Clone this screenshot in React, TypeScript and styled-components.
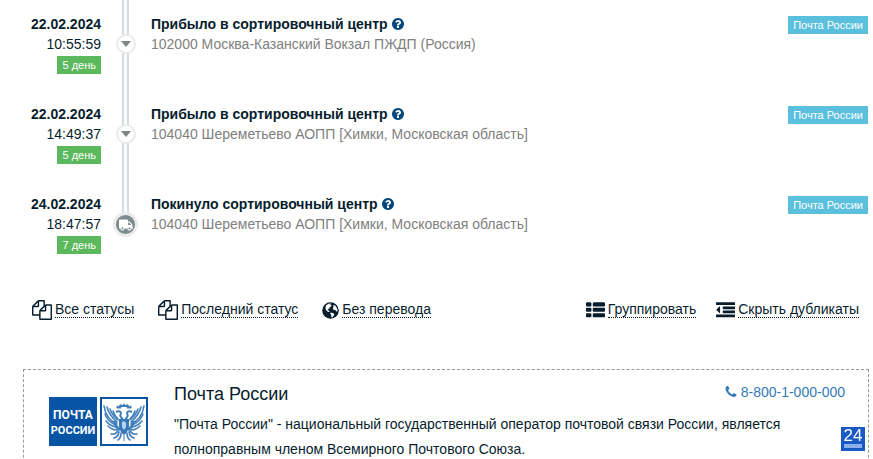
import React from "react";
import styled, { createGlobalStyle } from "styled-components";
import { FaTruck } from "react-icons/fa";

const GlobalStyle = createGlobalStyle`
  * { box-sizing: border-box; }
  html { scrollbar-width: none; }
  body {
    margin: 0;
    background: #fff;
    color: #071d2d;
    font: 14px/20px "Liberation Sans", Arial, sans-serif;
  }
`;

const Page = styled.main`
  padding: 0 4px 0 23px;
`;

const Timeline = styled.ol`
  list-style: none;
  margin: 0;
  padding: 0;
`;

const Event = styled.li<{ $first?: boolean }>`
  display: grid;
  grid-template-columns: 78px 49px minmax(0, 1fr) auto;
  padding-right: 1px;
  min-height: ${(p) => (p.$first ? 104 : 90)}px;
  > * {
    padding-top: ${(p) => (p.$first ? 14 : 0)}px;
  }
`;

const When = styled.div`
  display: flex;
  flex-direction: column;
  align-items: flex-end;
`;

const Tag = styled.span<{ $color: string }>`
  display: block;
  height: 18px;
  padding: 0 5px;
  margin-top: 2px;
  background: ${(p) => p.$color};
  color: #fff;
  font-size: 11px;
  line-height: 18px;
  white-space: nowrap;
`;

const Rail = styled.div<{ $end?: boolean }>`
  display: flex;
  justify-content: center;
  align-items: flex-start;
  background: linear-gradient(to right, #d5dce0 2px, #fff 2px 5px, #d5dce0 5px) no-repeat
    center top / 7px ${(p) => (p.$end ? "20px" : "100%")};
`;

const Marker = styled.span<{ $final?: boolean }>`
  display: flex;
  align-items: center;
  justify-content: center;
  width: ${(p) => (p.$final ? 25 : 20)}px;
  height: ${(p) => (p.$final ? 25 : 20)}px;
  margin-top: ${(p) => (p.$final ? 18 : 20)}px;
  border: ${(p) => (p.$final ? 3 : 2)}px solid #ebebeb;
  border-radius: 50%;
  background: ${(p) => (p.$final ? "#7b8c8d" : "#fff")};
  color: ${(p) => (p.$final ? "#fff" : "#7f8681")};
`;

const Details = styled.div`
  padding-left: 1px;
`;

const Title = styled.div`
  display: flex;
  align-items: center;
  gap: 3px;
  font-weight: bold;
`;

const HelpButton = styled.button`
  display: flex;
  padding: 0;
  border: 0;
  background: none;
  color: #03467d;
  cursor: pointer;
`;

const Place = styled.div`
  color: #808080;
`;

const Toolbar = styled.nav`
  display: flex;
  justify-content: space-between;
  padding: 15px 10px 0 9px;
`;

const ToolGroup = styled.div<{ $gap: number }>`
  display: flex;
  gap: ${(p) => p.$gap}px;
`;

const Tool = styled.button`
  display: flex;
  align-items: center;
  gap: 3px;
  height: 22px;
  padding: 0;
  border: 0;
  background: none;
  color: #071d2d;
  font: inherit;
  cursor: pointer;
`;

const ToolText = styled.span`
  border-bottom: 1px dotted #071d2d;
  line-height: 15px;
`;

const Carrier = styled.section`
  display: grid;
  grid-template-columns: 99px minmax(0, 1fr);
  gap: 26px;
  margin-top: 48px;
  padding: 10px 23px 20px 25px;
  border: 1px dashed #999;
`;

const Logo = styled.svg`
  display: block;
  margin-top: 17px;
`;

const CarrierHead = styled.header`
  display: flex;
  justify-content: space-between;
`;

const CarrierName = styled.h2`
  margin: 0;
  font-size: 18px;
  font-weight: normal;
  line-height: 28px;
`;

const Phone = styled.a`
  display: flex;
  align-items: center;
  gap: 3px;
  height: 24px;
  color: #337ab7;
  text-decoration: none;
`;

const About = styled.p`
  margin: 4px 40px 0 0;
  line-height: 25px;
`;

const Counter = styled.a`
  position: fixed;
  right: 8px;
  bottom: 8px;
  width: 24px;
  height: 24px;
  background: #1859c4;
  color: #fff;
  font-size: 17px;
  line-height: 18px;
  text-align: center;
  text-decoration: none;
  &::after {
    content: "";
    display: block;
    height: 4px;
    margin: -1px 3px 0;
    background: #8eb0ea;
  }
`;

const bars = (y: number) =>
  `M512 ${y}v192q0 40-28 68t-68 28h-320q-40 0-68-28t-28-68v-192q0-40 28-68t68-28h320q40 0 68 28t28 68zM1792 ${y}v192q0 40-28 68t-68 28h-960q-40 0-68-28t-28-68v-192q0-40 28-68t68-28h960q40 0 68 28t28 68z`;
const line = (y: number, w: number) =>
  `M1792 ${y}v192q0 13-9.5 22.5t-22.5 9.5h-${w}q-13 0-22.5-9.5t-9.5-22.5v-192q0-13 9.5-22.5t22.5-9.5h${w}q13 0 22.5 9.5t9.5 22.5z`;

const paths = {
  help: "M1024 1376v-192q0-14-9-23t-23-9h-192q-14 0-23 9t-9 23v192q0 14 9 23t23 9h192q14 0 23-9t9-23zm256-672q0-88-55.5-163t-138.5-116-170-41q-243 0-371 213-15 24 8 42l132 100q7 6 19 6 16 0 25-12 53-68 86-92 34-24 86-24 48 0 85.5 26t37.5 59q0 38-20 61t-68 45q-63 28-115.5 86.5t-52.5 125.5v36q0 14 9 23t23 9h192q14 0 23-9t9-23q0-19 21.5-49.5t54.5-49.5q32-18 49-28.5t46-35 44.5-48 28-60.5 12.5-81zm384 192q0 209-103 385.5t-279.5 279.5-385.5 103-385.5-103-279.5-279.5-103-385.5 103-385.5 279.5-279.5 385.5-103 385.5 103 279.5 279.5 103 385.5z",
  copy: "M1696 384q40 0 68 28t28 68v1216q0 40-28 68t-68 28h-960q-40 0-68-28t-28-68v-288h-544q-40 0-68-28t-28-68v-672q0-40 20-88t48-76l408-408q28-28 76-48t88-20h416q40 0 68 28t28 68v328q68-40 128-40h416zm-544 213l-299 299h299v-299zm-640-384l-299 299h299v-299zm196 647l316-316v-416h-384v416q0 40-28 68t-68 28h-416v640h512v-256q0-40 20-88t48-76zm956 804v-1152h-384v416q0 40-28 68t-68 28h-416v640h896z",
  list: [224, 736, 1248].map(bars).join(""),
  outdent:
    "M384 544v576q0 13-9.5 22.5t-22.5 9.5q-14 0-23-9l-288-288q-9-9-9-23t9-23l288-288q9-9 23-9 13 0 22.5 9.5t9.5 22.5z" +
    line(160, 1728) + line(544, 1088) + line(928, 1088) + line(1312, 1728),
  phone: "M1600 1240q0 27-10 70.5t-21 68.5q-21 50-122 106-94 51-186 51-27 0-53-3.5t-57.5-12.5-47-14.5-55.5-20.5-49-18q-98-35-175-83-127-79-264-216t-216-264q-48-77-83-175-3-9-18-49t-20.5-55.5-14.5-47-12.5-57.5-3.5-53q0-92 51-186 56-101 106-122 25-11 68.5-21t70.5-10q14 0 21 3 18 6 53 76 11 19 30 54t35 63.5 31 53.5q3 4 17.5 25t21.5 35.5 7 28.5q0 20-28.5 50t-62 55-62 53-28.5 46q0 9 5 22.5t8.5 20.5 14 24 11.5 19q76 137 174 235t235 174q2 1 19 11.5t24 14 20.5 8.5 22.5 5q18 0 46-28.5t53-62 55-62 50-28.5q14 0 28.5 7t35.5 21.5 25 17.5q25 15 53.5 31t63.5 35 54 30q70 35 76 53 3 7 3 21z",
};

const Icon = ({ name, size }: { name: keyof typeof paths; size: number }) => (
  <svg width={size} height={size} viewBox="0 0 1792 1792" fill="currentColor" aria-hidden="true">
    <path d={paths[name]} />
  </svg>
);

const Globe = () => (
  <svg width="17" height="17" viewBox="0 0 17 17" aria-hidden="true">
    <circle cx="8.5" cy="8.5" r="8.3" fill="currentColor" />
    <path
      d="M4.2 3.2L6.6 1.7L9.3 1.6L8.3 2.8L9.6 3.2L9 4.6L7.5 5.3L7.6 6.4L6 7L5.6 8.2L7 8.6L7.6 9.8L6.6 9.9L5 9.2L3.6 7.3L3.5 5.2ZM11 3.3L13.2 3.5L15.2 6.5L15.5 9.3L14.2 9.6L13.4 8L11.5 7.8L10.7 6.3L11.6 5.1ZM9 10.4L11.4 11.2L12.4 12.4L10.6 15.2L9.4 15.3L9.2 13L8.2 11.5Z"
      fill="#fff"
    />
  </svg>
);

const feathers = [
  "M17 27Q6 22 4 9",
  "M16 28Q8 25 5 17",
  "M16 30Q10 29 6 24",
  "M17 25Q9 18 7 10",
  "M18 23Q12 18 10 12",
  "M18 22Q14 18 13 14",
  "M17 33Q12 33 8 29",
  "M18 34Q15 38 11 37",
  "M19 35Q18 40 14 41",
  "M21 36Q21 41 18 43",
];

const EagleHalf = () => (
  <g fill="none" stroke="#3f7ebc">
    {feathers.map((d) => (
      <path key={d} d={d} strokeWidth="1.6" strokeLinecap="round" />
    ))}
    <path d="M23 22Q19 20 21 16Q20 13 16 15" strokeWidth="2" />
    <path d="M17 11V9L19 10L20 8L21 11Z" fill="#3f7ebc" strokeWidth="1" />
    <path d="M15 24Q15 30 20 33" strokeWidth="3" />
  </g>
);

const PostLogo = () => (
  <Logo width="99" height="50" viewBox="0 0 99 50" role="img" aria-label="Почта России">
    <rect width="48" height="49" fill="#0754a5" />
    <g fill="#fff" fontFamily="Roboto, sans-serif" fontWeight="bold" textAnchor="middle">
      <text x="24" y="22" fontSize="12">ПОЧТА</text>
      <text x="24" y="37" fontSize="11">РОССИИ</text>
    </g>
    <rect x="52" y="1" width="46" height="47" fill="#fff" stroke="#0754a5" strokeWidth="2" />
    <g transform="translate(51 0)">
      <EagleHalf />
      <g transform="translate(48 0) scale(-1 1)">
        <EagleHalf />
      </g>
      <path d="M21 10L20 7L23 8L24 6L25 8L28 7L27 10Z" fill="#3f7ebc" />
      <path d="M19 22H29V30Q28 35 24 38Q20 35 19 30Z" fill="#3577b8" />
      <path d="M22 25L24 24L26 26V30L24 33L22 30Z" fill="#b8d3eb" />
      <path d="M24 38V44" stroke="#3f7ebc" />
    </g>
  </Logo>
);

const events = [
  { date: "22.02.2024", time: "10:55:59", days: "5 день", title: "Прибыло в сортировочный центр", place: "102000 Москва-Казанский Вокзал ПЖДП (Россия)" },
  { date: "22.02.2024", time: "14:49:37", days: "5 день", title: "Прибыло в сортировочный центр", place: "104040 Шереметьево АОПП [Химки, Московская область]" },
  { date: "24.02.2024", time: "18:47:57", days: "7 день", title: "Покинуло сортировочный центр", place: "104040 Шереметьево АОПП [Химки, Московская область]" },
];

export default function App() {
  return (
    <Page>
      <GlobalStyle />
      <Timeline>
        {events.map((e, i) => {
          const last = i === events.length - 1;
          return (
            <Event key={e.time} $first={i === 0}>
              <When>
                <strong>{e.date}</strong>
                <span>{e.time}</span>
                <Tag $color="#5cb85c">{e.days}</Tag>
              </When>
              <Rail $end={last}>
                <Marker $final={last}>
                  {last ? (
                    <FaTruck size={14} />
                  ) : (
                    <svg width="10" height="6" viewBox="0 0 10 6" aria-hidden="true">
                      <path d="M0 0H10L5 6Z" fill="currentColor" />
                    </svg>
                  )}
                </Marker>
              </Rail>
              <Details>
                <Title>
                  {e.title}
                  <HelpButton aria-label="Справка">
                    <Icon name="help" size={14} />
                  </HelpButton>
                </Title>
                <Place>{e.place}</Place>
              </Details>
              <div>
                <Tag $color="#5bc0de">Почта России</Tag>
              </div>
            </Event>
          );
        })}
      </Timeline>
      <Toolbar>
        <ToolGroup $gap={24}>
          <Tool><Icon name="copy" size={20} /><ToolText>Все статусы</ToolText></Tool>
          <Tool><Icon name="copy" size={20} /><ToolText>Последний статус</ToolText></Tool>
          <Tool><Globe /><ToolText>Без перевода</ToolText></Tool>
        </ToolGroup>
        <ToolGroup $gap={20}>
          <Tool><Icon name="list" size={19} /><ToolText>Группировать</ToolText></Tool>
          <Tool><Icon name="outdent" size={19} /><ToolText>Скрыть дубликаты</ToolText></Tool>
        </ToolGroup>
      </Toolbar>
      <Carrier>
        <PostLogo />
        <div>
          <CarrierHead>
            <CarrierName>Почта России</CarrierName>
            <Phone href="tel:88001000000"><Icon name="phone" size={14} />8-800-1-000-000</Phone>
          </CarrierHead>
          <About>
            "Почта России" - национальный государственный оператор почтовой связи России, является
            полноправным членом Всемирного Почтового Союза.
          </About>
        </div>
      </Carrier>
      <Counter href="#stats">24</Counter>
    </Page>
  );
}
